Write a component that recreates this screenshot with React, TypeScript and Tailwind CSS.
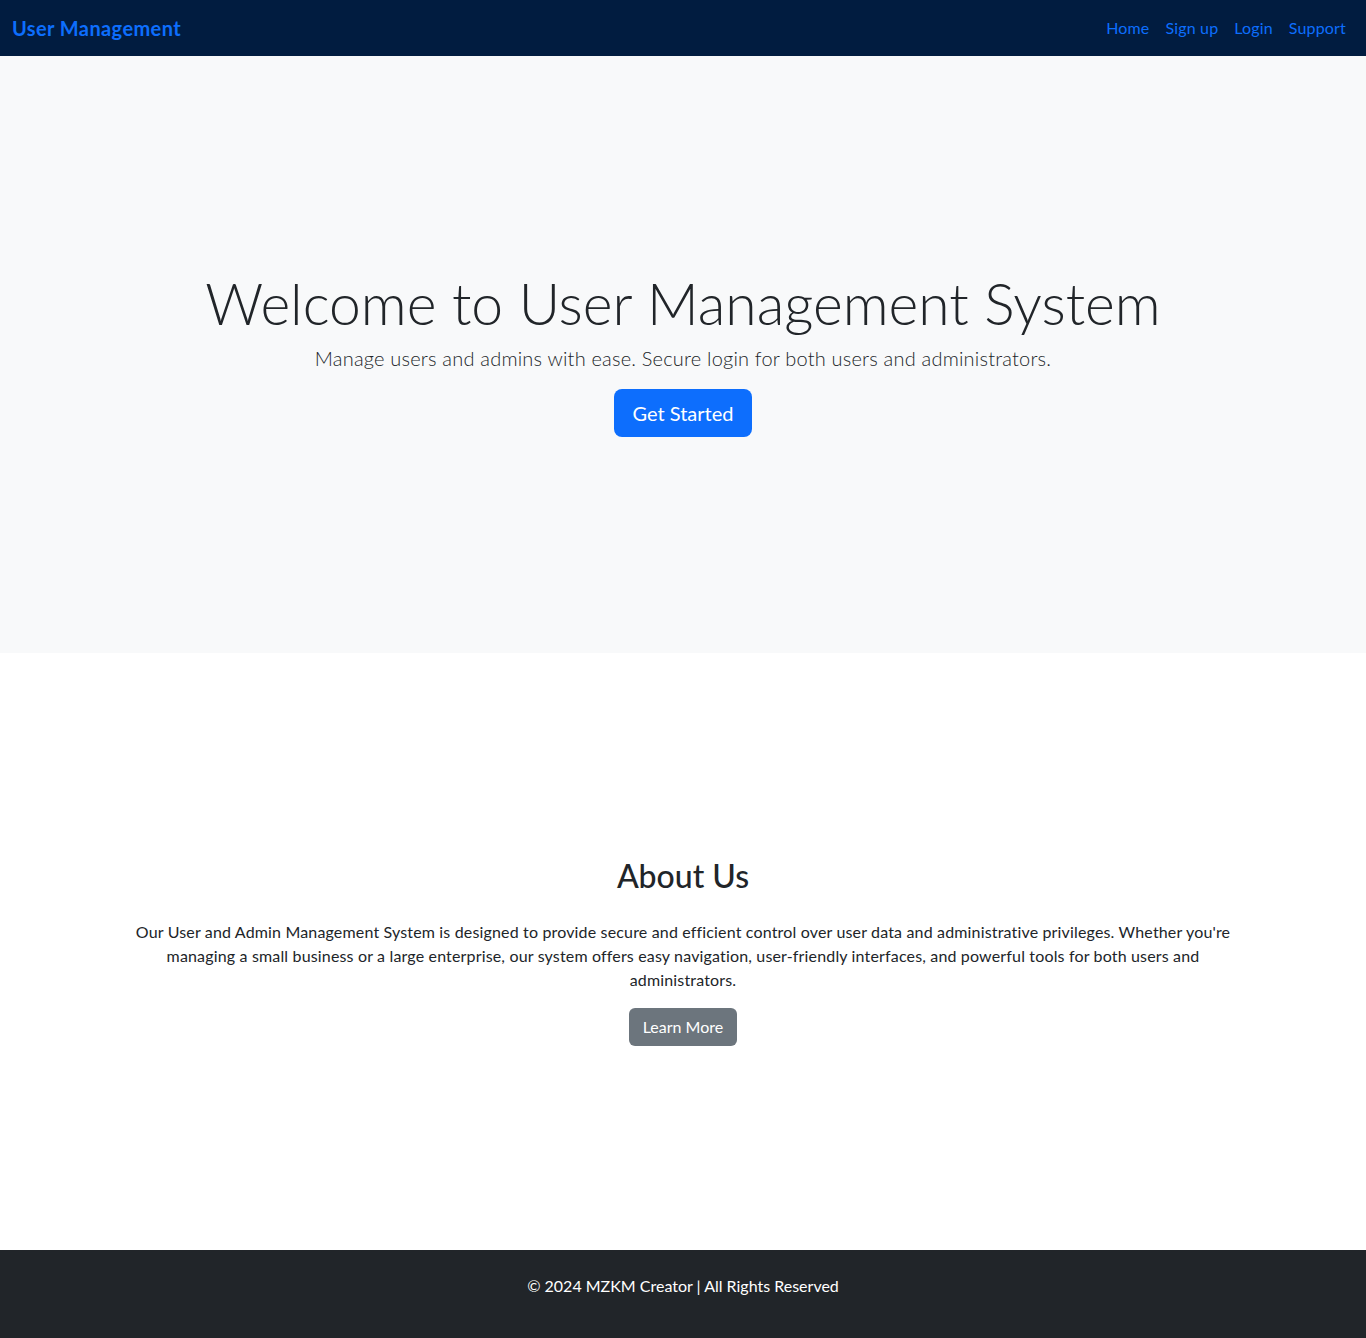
export default function App() {
  return (
    <div className="min-h-screen bg-white text-[#212529] font-['Lato',sans-serif]">
      {/* Navbar */}
      <nav className="h-14 bg-[#011c40] flex items-center justify-between pl-3 pr-3">
        <a href="#" className="text-xl font-bold tracking-[0.02em] text-[#0d6efd]">
          User Management
        </a>
        <div className="flex items-center">
          <a href="#" className="px-2 text-base tracking-[0.01em] text-[#0d6efd]">Home</a>
          <a href="#" className="px-2 text-base tracking-[0.01em] text-[#0d6efd]">Sign up</a>
          <a href="#" className="px-2 text-base tracking-[0.01em] text-[#0d6efd]">Login</a>
          <a href="#" className="px-2 text-base tracking-[0.01em] text-[#0d6efd]">Support</a>
        </div>
      </nav>

      {/* Hero */}
      <section className="h-[597px] bg-[#f8f9fa] flex flex-col items-center justify-center text-center">
        <h1 className="text-[57px] leading-[1.1] font-light mb-2">
          Welcome to User Management System
        </h1>
        <p className="text-xl leading-[1.5] font-light tracking-[0.01em] mb-4">
          Manage users and admins with ease. Secure login for both users and administrators.
        </p>
        <a
          href="#"
          className="h-12 w-[138px] flex items-center justify-center rounded-lg bg-[#0d6efd] text-white text-xl"
        >
          Get Started
        </a>
      </section>

      {/* About */}
      <section className="h-[597px] flex flex-col items-center justify-center text-center px-3">
        <h2 className="text-[32px] leading-[1.2] font-medium mb-6">About Us</h2>
        <p className="max-w-[1120px] text-base leading-6 tracking-[0.01em] mb-4">
          Our User and Admin Management System is designed to provide secure and efficient control over
          user data and administrative privileges. Whether you're managing a small business or a large
          enterprise, our system offers easy navigation, user-friendly interfaces, and powerful tools for
          both users and administrators.
        </p>
        <a
          href="#"
          className="h-[38px] w-[108px] flex items-center justify-center rounded-md bg-[#6c757d] text-white text-base"
        >
          Learn More
        </a>
      </section>

      {/* Footer */}
      <footer className="bg-[#212529] text-white text-center py-6">
        <p className="text-base leading-6 mb-4">© 2024 MZKM Creator | All Rights Reserved</p>
      </footer>
    </div>
  );
}
